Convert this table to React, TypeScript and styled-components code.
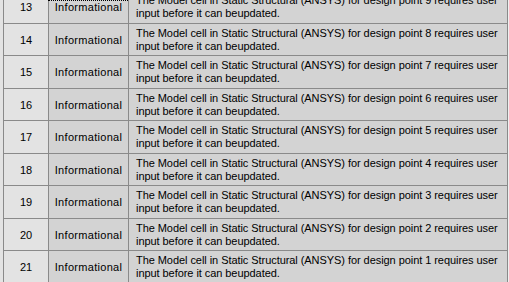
import styled, { createGlobalStyle } from 'styled-components';

const GlobalStyle = createGlobalStyle`
  html, body {
    margin: 0;
    padding: 0;
    background: #f0f0f0;
  }
  body {
    font-family: 'Liberation Sans', Arial, sans-serif;
    font-size: 11px;
    color: #000;
  }
`;

const rows = [13, 14, 15, 16, 17, 18, 19, 20, 21];

const App = () => {
  return (
    <>
      <GlobalStyle />
      <Viewport>
        <FocusMark />
        <Table>
          {rows.map((n, i) => (
            <Row key={n} $tall={i % 2 === 0}>
              <NumCell>{n}</NumCell>
              <TypeCell>Informational</TypeCell>
              <MessageCell>
                The Model cell in Static Structural (ANSYS) for design point {22 - n} requires user
                <br />
                input before it can beupdated.
              </MessageCell>
            </Row>
          ))}
        </Table>
      </Viewport>
    </>
  );
};

const Viewport = styled.div`
  position: relative;
  width: 509px;
  height: 282px;
  overflow: hidden;
  background: linear-gradient(to right, #e3e3e3 3px, #f0f0f0 3px);
`;

const FocusMark = styled.div`
  position: absolute;
  top: 0;
  left: 48px;
  width: 80px;
  height: 0;
  border-top: 1px dotted #000;
  z-index: 2;
`;

const Table = styled.div`
  margin-left: 3px;
  margin-top: -9px;
  width: 505px;
  border-left: 1px solid #8a8a8a;
  border-right: 1px solid #8a8a8a;
  box-sizing: border-box;
`;

const Row = styled.div<{ $tall: boolean }>`
  display: grid;
  grid-template-columns: 44px 80px 1fr;
  height: ${({ $tall }) => ($tall ? '33px' : '32px')};
  border-bottom: 1px solid #8a8a8a;
  box-sizing: border-box;
`;

const NumCell = styled.div`
  display: flex;
  align-items: center;
  justify-content: center;
  background: #e3e3e3;
`;

const TypeCell = styled.div`
  display: flex;
  align-items: center;
  justify-content: center;
  background: #d3d3d3;
  border-left: 1px solid #8a8a8a;
  white-space: nowrap;
  letter-spacing: 0.3px;
`;

const MessageCell = styled.div`
  background: #d3d3d3;
  border-left: 1px solid #8a8a8a;
  padding: 3px 0 0 7px;
  line-height: 13px;
  white-space: nowrap;
  overflow: hidden;
  letter-spacing: -0.06px;
`;

export default App;
